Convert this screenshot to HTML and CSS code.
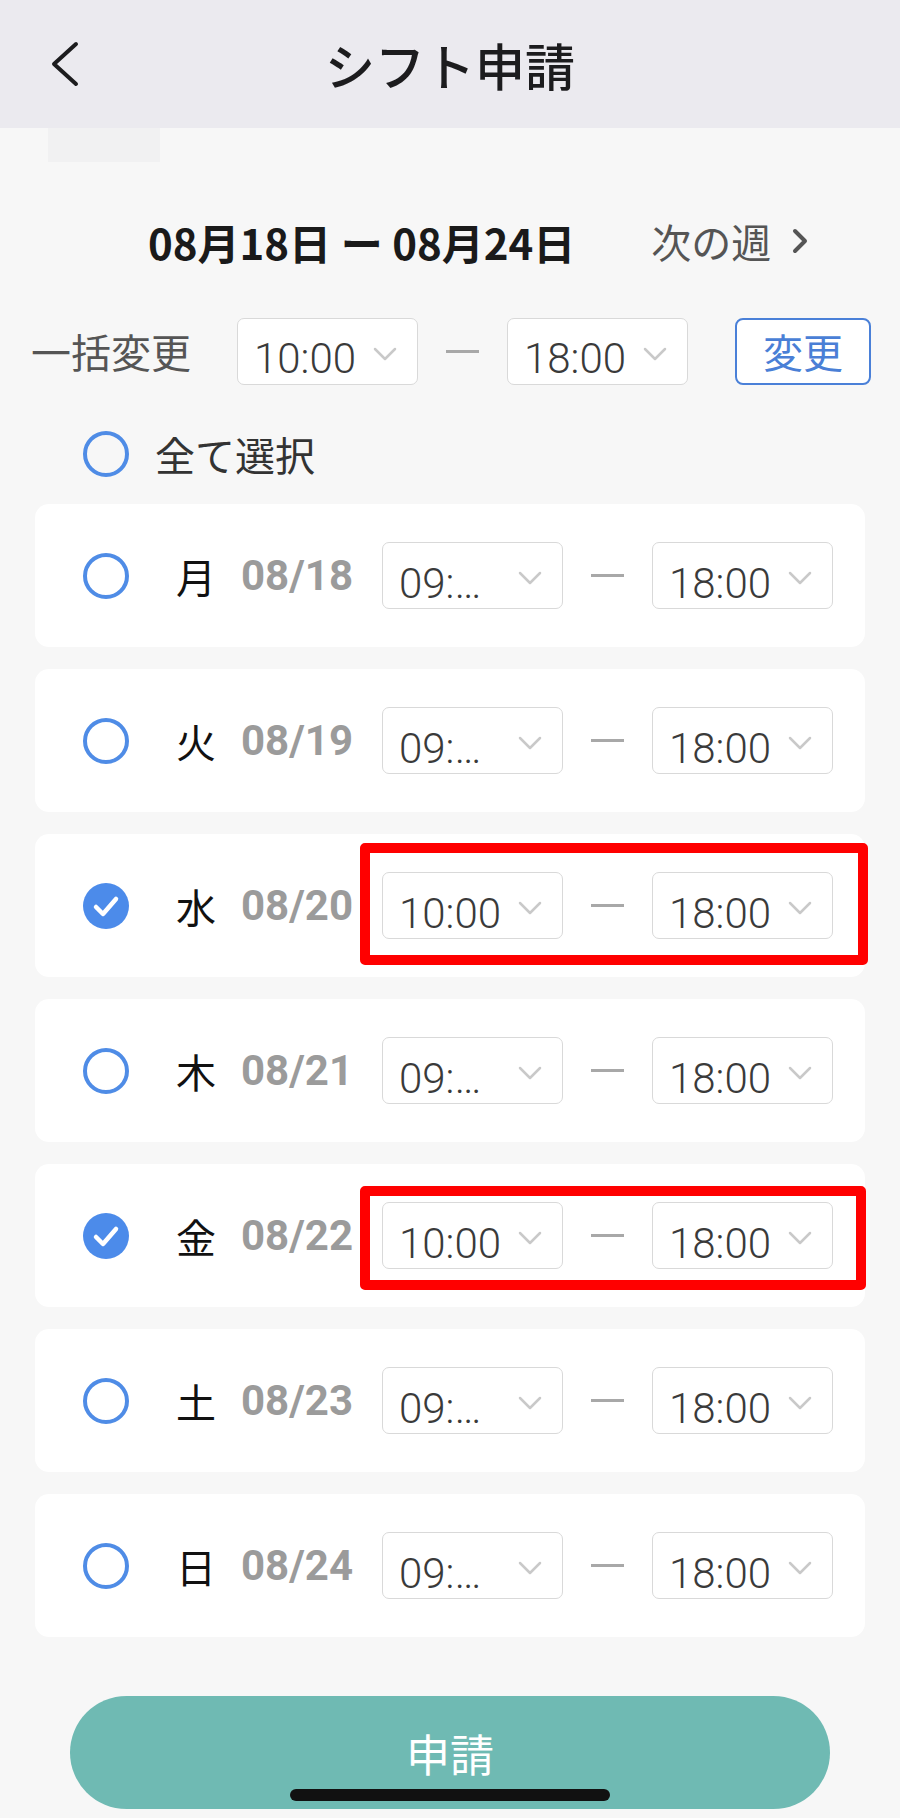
FILE: index.html
```html
<!DOCTYPE html>
<html lang="ja">
<head>
    <meta charset="UTF-8">
    <meta name="viewport" content="width=device-width, initial-scale=1.0">
    <title>シフト申請</title>
    <link rel="stylesheet" href="styles.css">
</head>
<body>
<div class="page">
    <header class="nav-bar">
        <a class="back">
            <svg width="30" height="46" viewBox="0 0 30 46"><polyline points="26,3 4,23 26,43" fill="none" stroke="#1c1c1e" stroke-width="4" stroke-linecap="round" stroke-linejoin="round"/></svg>
        </a>
        <h1 class="title">シフト申請</h1>
        <span></span>
    </header>

    <div class="ghost-tab"></div>

    <div class="week-nav">
        <span class="week-range">08月18日 ー 08月24日</span>
        <span class="next-week">次の週
            <svg width="16" height="26" viewBox="0 0 16 26"><polyline points="3,3 13,13 3,23" fill="none" stroke="#555" stroke-width="4" stroke-linecap="round" stroke-linejoin="round"/></svg>
        </span>
    </div>

    <div class="bulk-row">
        <span class="bulk-label">一括変更</span>
        <div class="time-select">
            <span class="time-value">10:00</span>
            <svg class="caret" width="24" height="14" viewBox="0 0 24 14"><polyline points="2,2 12,12 22,2" fill="none" stroke="#c9c9c9" stroke-width="2.5" stroke-linecap="round" stroke-linejoin="round"/></svg>
        </div>
        <span class="range-dash"></span>
        <div class="time-select">
            <span class="time-value">18:00</span>
            <svg class="caret" width="24" height="14" viewBox="0 0 24 14"><polyline points="2,2 12,12 22,2" fill="none" stroke="#c9c9c9" stroke-width="2.5" stroke-linecap="round" stroke-linejoin="round"/></svg>
        </div>
        <button class="apply-btn" type="button">変更</button>
    </div>

    <div class="select-all">
        <span class="radio"></span>
        <span>全て選択</span>
    </div>

    <div class="day-list">
        <div class="day-card">
            <span class="radio"></span>
            <span class="day">月</span>
            <span class="date">08/18</span>
            <div class="time-select"><span class="time-value">09:…</span><svg class="caret" width="24" height="14" viewBox="0 0 24 14"><polyline points="2,2 12,12 22,2" fill="none" stroke="#c9c9c9" stroke-width="2.5" stroke-linecap="round" stroke-linejoin="round"/></svg></div>
            <span class="range-dash"></span>
            <div class="time-select"><span class="time-value">18:00</span><svg class="caret" width="24" height="14" viewBox="0 0 24 14"><polyline points="2,2 12,12 22,2" fill="none" stroke="#c9c9c9" stroke-width="2.5" stroke-linecap="round" stroke-linejoin="round"/></svg></div>
        </div>

        <div class="day-card">
            <span class="radio"></span>
            <span class="day">火</span>
            <span class="date">08/19</span>
            <div class="time-select"><span class="time-value">09:…</span><svg class="caret" width="24" height="14" viewBox="0 0 24 14"><polyline points="2,2 12,12 22,2" fill="none" stroke="#c9c9c9" stroke-width="2.5" stroke-linecap="round" stroke-linejoin="round"/></svg></div>
            <span class="range-dash"></span>
            <div class="time-select"><span class="time-value">18:00</span><svg class="caret" width="24" height="14" viewBox="0 0 24 14"><polyline points="2,2 12,12 22,2" fill="none" stroke="#c9c9c9" stroke-width="2.5" stroke-linecap="round" stroke-linejoin="round"/></svg></div>
        </div>

        <div class="day-card">
            <span class="radio checked"><svg width="46" height="46" viewBox="0 0 46 46"><polyline points="13,24 20,31 33,16" fill="none" stroke="#fff" stroke-width="4.5" stroke-linecap="round" stroke-linejoin="round"/></svg></span>
            <span class="day">水</span>
            <span class="date">08/20</span>
            <div class="time-select"><span class="time-value">10:00</span><svg class="caret" width="24" height="14" viewBox="0 0 24 14"><polyline points="2,2 12,12 22,2" fill="none" stroke="#c9c9c9" stroke-width="2.5" stroke-linecap="round" stroke-linejoin="round"/></svg></div>
            <span class="range-dash"></span>
            <div class="time-select"><span class="time-value">18:00</span><svg class="caret" width="24" height="14" viewBox="0 0 24 14"><polyline points="2,2 12,12 22,2" fill="none" stroke="#c9c9c9" stroke-width="2.5" stroke-linecap="round" stroke-linejoin="round"/></svg></div>
            <div class="mark mark-a"></div>
        </div>

        <div class="day-card">
            <span class="radio"></span>
            <span class="day">木</span>
            <span class="date">08/21</span>
            <div class="time-select"><span class="time-value">09:…</span><svg class="caret" width="24" height="14" viewBox="0 0 24 14"><polyline points="2,2 12,12 22,2" fill="none" stroke="#c9c9c9" stroke-width="2.5" stroke-linecap="round" stroke-linejoin="round"/></svg></div>
            <span class="range-dash"></span>
            <div class="time-select"><span class="time-value">18:00</span><svg class="caret" width="24" height="14" viewBox="0 0 24 14"><polyline points="2,2 12,12 22,2" fill="none" stroke="#c9c9c9" stroke-width="2.5" stroke-linecap="round" stroke-linejoin="round"/></svg></div>
        </div>

        <div class="day-card">
            <span class="radio checked"><svg width="46" height="46" viewBox="0 0 46 46"><polyline points="13,24 20,31 33,16" fill="none" stroke="#fff" stroke-width="4.5" stroke-linecap="round" stroke-linejoin="round"/></svg></span>
            <span class="day">金</span>
            <span class="date">08/22</span>
            <div class="time-select"><span class="time-value">10:00</span><svg class="caret" width="24" height="14" viewBox="0 0 24 14"><polyline points="2,2 12,12 22,2" fill="none" stroke="#c9c9c9" stroke-width="2.5" stroke-linecap="round" stroke-linejoin="round"/></svg></div>
            <span class="range-dash"></span>
            <div class="time-select"><span class="time-value">18:00</span><svg class="caret" width="24" height="14" viewBox="0 0 24 14"><polyline points="2,2 12,12 22,2" fill="none" stroke="#c9c9c9" stroke-width="2.5" stroke-linecap="round" stroke-linejoin="round"/></svg></div>
            <div class="mark mark-b"></div>
        </div>

        <div class="day-card">
            <span class="radio"></span>
            <span class="day">土</span>
            <span class="date">08/23</span>
            <div class="time-select"><span class="time-value">09:…</span><svg class="caret" width="24" height="14" viewBox="0 0 24 14"><polyline points="2,2 12,12 22,2" fill="none" stroke="#c9c9c9" stroke-width="2.5" stroke-linecap="round" stroke-linejoin="round"/></svg></div>
            <span class="range-dash"></span>
            <div class="time-select"><span class="time-value">18:00</span><svg class="caret" width="24" height="14" viewBox="0 0 24 14"><polyline points="2,2 12,12 22,2" fill="none" stroke="#c9c9c9" stroke-width="2.5" stroke-linecap="round" stroke-linejoin="round"/></svg></div>
        </div>

        <div class="day-card">
            <span class="radio"></span>
            <span class="day">日</span>
            <span class="date">08/24</span>
            <div class="time-select"><span class="time-value">09:…</span><svg class="caret" width="24" height="14" viewBox="0 0 24 14"><polyline points="2,2 12,12 22,2" fill="none" stroke="#c9c9c9" stroke-width="2.5" stroke-linecap="round" stroke-linejoin="round"/></svg></div>
            <span class="range-dash"></span>
            <div class="time-select"><span class="time-value">18:00</span><svg class="caret" width="24" height="14" viewBox="0 0 24 14"><polyline points="2,2 12,12 22,2" fill="none" stroke="#c9c9c9" stroke-width="2.5" stroke-linecap="round" stroke-linejoin="round"/></svg></div>
        </div>
    </div>

    <button class="submit-btn" type="button">申請</button>

    <div class="home-indicator"></div>
</div>
</body>
</html>
```

FILE: styles.css
```css
body {
    margin: 0;
    background-color: #f7f7f7;
    font-family: "Noto Sans CJK JP", sans-serif;
}

.page {
    position: relative;
    width: 900px;
    height: 1818px;
    overflow: hidden;
}

/* top bar */
.nav-bar {
    height: 128px;
    background-color: #ebeaef;
    display: grid;
    grid-template-columns: 110px 1fr 110px;
    align-items: center;
}

.back {
    display: flex;
    padding-left: 50px;
}

.title {
    margin: 0;
    text-align: center;
    font-size: 50px;
    font-weight: 500;
    line-height: 1;
    color: #1c1c1e;
}

.ghost-tab {
    width: 112px;
    height: 34px;
    margin-left: 48px;
    background-color: #f1f1f2;
}

/* week */
.week-nav {
    display: flex;
    align-items: center;
    height: 56px;
    margin-top: 51px;
    padding-left: 148px;
}

.week-range {
    font-size: 42px;
    font-weight: 700;
    color: #1a1a1a;
}

.next-week {
    display: flex;
    align-items: center;
    gap: 21px;
    margin-left: 76px;
    font-size: 40px;
    color: #555;
}

/* bulk change */
.bulk-row {
    display: flex;
    align-items: center;
    height: 68px;
    margin-top: 48px;
    padding-left: 31px;
}

.bulk-label {
    width: 206px;
    font-size: 40px;
    color: #555;
}

.time-select {
    width: 181px;
    height: 67px;
    box-sizing: border-box;
    flex-shrink: 0;
    display: flex;
    align-items: center;
    justify-content: space-between;
    padding: 0 20px 0 16px;
    border: 1.5px solid #d9d9d9;
    border-radius: 7px;
    background-color: #fff;
}

.time-value {
    padding-top: 16px;
    font-family: Roboto, "Liberation Sans", sans-serif;
    font-size: 42px;
    font-weight: 300;
    line-height: 1;
    color: #3a3a3a;
}

.caret {
    margin-top: 5px;
}

.range-dash {
    width: 33px;
    height: 3px;
    margin: 0 28px;
    background-color: #a8a8a8;
    flex-shrink: 0;
}

.apply-btn {
    width: 136px;
    height: 67px;
    margin-left: 47px;
    padding: 0;
    border: 2px solid #4a80d8;
    border-radius: 8px;
    background-color: #fff;
    color: #4a7fd6;
    font-family: inherit;
    font-size: 40px;
}

/* select all */
.select-all {
    display: flex;
    align-items: center;
    gap: 26px;
    height: 46px;
    margin-top: 46px;
    padding-left: 83px;
    font-size: 40px;
    color: #333;
}

.radio {
    width: 46px;
    height: 46px;
    box-sizing: border-box;
    flex-shrink: 0;
    border: 4px solid #4f8ce6;
    border-radius: 50%;
}

.radio.checked {
    display: flex;
    border: none;
    background-color: #4c8bea;
}

/* day rows */
.day-list {
    display: flex;
    flex-direction: column;
    gap: 22px;
    margin-top: 27px;
    padding: 0 35px;
}

.day-card {
    position: relative;
    display: flex;
    align-items: center;
    height: 143px;
    padding-left: 48px;
    border-radius: 14px;
    background-color: #fff;
}

.day {
    width: 40px;
    margin-left: 47px;
    font-size: 40px;
    color: #111;
}

.date {
    margin: 0 29px 0 25px;
    font-family: Roboto, "Liberation Sans", sans-serif;
    font-size: 42px;
    font-weight: 700;
    color: #9b9b9b;
}

/* red annotation boxes */
.mark {
    position: absolute;
    box-sizing: border-box;
    border: 10px solid #ff0000;
    border-radius: 5px;
}

.mark-a {
    left: 325px;
    top: 9px;
    width: 508px;
    height: 122px;
}

.mark-b {
    left: 325px;
    top: 22px;
    width: 506px;
    height: 104px;
}

/* submit */
.submit-btn {
    display: block;
    width: 760px;
    height: 113px;
    margin: 59px 0 0 70px;
    padding: 0;
    border: none;
    border-radius: 57px;
    background-color: #6fbab3;
    color: #fff;
    font-family: inherit;
    font-size: 44px;
}

.home-indicator {
    position: absolute;
    left: 290px;
    top: 1789px;
    width: 320px;
    height: 12px;
    border-radius: 6px;
    background-color: #111;
}
```
